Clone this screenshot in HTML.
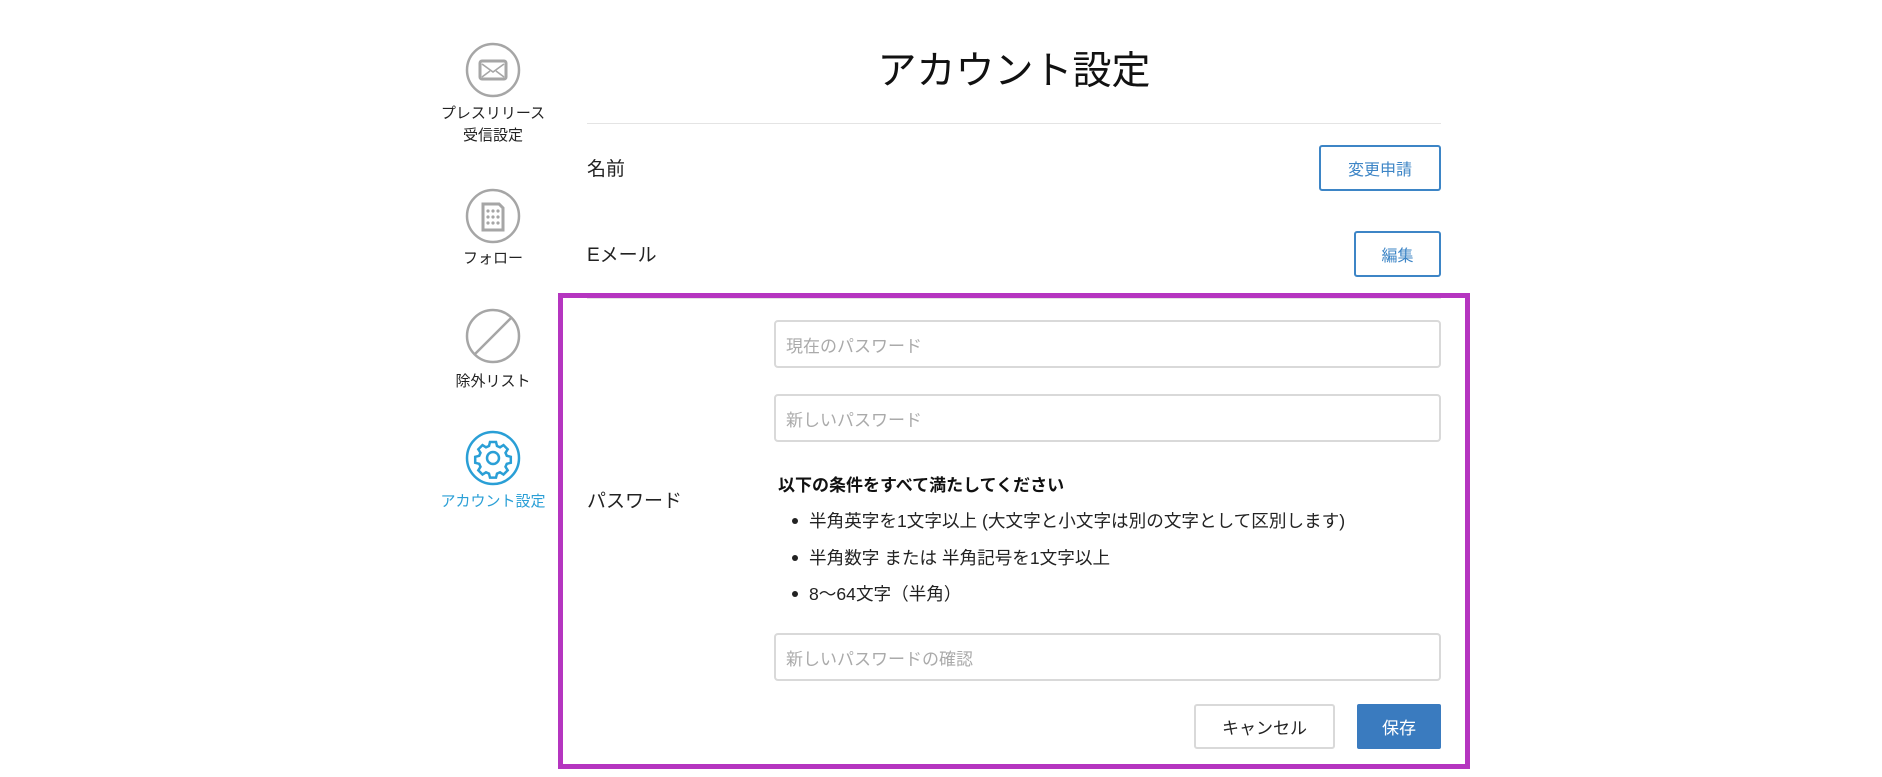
<!DOCTYPE html>
<html><head><meta charset="utf-8"><style>
*{box-sizing:border-box;margin:0;padding:0}
body{width:1882px;height:777px;background:#fff;font-family:"Liberation Sans","Noto Sans CJK JP",sans-serif;color:#222;position:relative;overflow:hidden}
.a{position:absolute}
.lbl{position:absolute;width:140px;left:423px;text-align:center;font-size:15px;line-height:22px;color:#222}
.ic{position:absolute;left:465px;width:56px;height:56px}
.btn{position:absolute;border:2px solid #3d85c6;border-radius:3px;color:#3d85c6;font-size:16px;display:flex;align-items:center;justify-content:center;background:#fff}
.inp{position:absolute;left:774px;width:667px;height:48px;border:2px solid #d9d9d9;border-radius:4px;color:#aaa;font-size:17px;padding-left:10px;display:flex;align-items:center}
.li{position:absolute;left:792px;font-size:17.6px;color:#222}
.li:before{content:"";position:absolute;left:0;top:10px;width:6px;height:6px;border-radius:50%;background:#222}
.li span{margin-left:17px}
</style></head><body>
<svg class="ic" style="top:42px" viewBox="0 0 56 56"><circle cx="28" cy="28" r="26" fill="none" stroke="#a6a6a6" stroke-width="2.5"/><rect x="15" y="19" width="26" height="18" rx="2" fill="none" stroke="#a6a6a6" stroke-width="3"/><path d="M17 22l11 8 11-8M17 35l8-6M39 35l-8-6" fill="none" stroke="#a6a6a6" stroke-width="1.6"/></svg>
<div class="lbl" style="top:103px">プレスリリース<br>受信設定</div>
<svg class="ic" style="top:188px" viewBox="0 0 56 56"><circle cx="28" cy="28" r="26" fill="none" stroke="#a6a6a6" stroke-width="2.5"/><path d="M18 16h16l4 4v22H18z" fill="none" stroke="#a6a6a6" stroke-width="3"/><g fill="#a6a6a6"><circle cx="23" cy="23" r="1.6"/><circle cx="28" cy="23" r="1.6"/><circle cx="33" cy="23" r="1.6"/><circle cx="23" cy="29" r="1.6"/><circle cx="28" cy="29" r="1.6"/><circle cx="33" cy="29" r="1.6"/><circle cx="23" cy="35" r="1.6"/><circle cx="28" cy="35" r="1.6"/><circle cx="33" cy="35" r="1.6"/></g></svg>
<div class="lbl" style="top:248px">フォロー</div>
<svg class="ic" style="top:308px" viewBox="0 0 56 56"><circle cx="28" cy="28" r="26" fill="none" stroke="#a6a6a6" stroke-width="2.5"/><path d="M46 10L10 46" stroke="#a6a6a6" stroke-width="2.5"/></svg>
<div class="lbl" style="top:371px">除外リスト</div>
<svg class="ic" style="top:430px" viewBox="0 0 56 56"><circle cx="28" cy="28" r="26" fill="none" stroke="#2a9fd6" stroke-width="2.5"/><g fill="none" stroke="#2a9fd6" stroke-width="2.5"><path d="M25 12h6l1 4 3 1.3 3.5-2.2 4.2 4.2-2.2 3.5 1.3 3 4 1v6l-4 1-1.3 3 2.2 3.5-4.2 4.2-3.5-2.2-3 1.3-1 4h-6l-1-4-3-1.3-3.5 2.2-4.2-4.2 2.2-3.5-1.3-3-4-1v-6l4-1 1.3-3-2.2-3.5 4.2-4.2 3.5 2.2 3-1.3z"/><circle cx="28" cy="28" r="6"/></g></svg>
<div class="lbl" style="top:491px;color:#2a9fd6">アカウント設定</div>
<div class="a" style="left:587px;width:854px;top:44px;text-align:center;font-size:39px;line-height:56px;color:#111">アカウント設定</div>
<div class="a" style="left:587px;width:854px;top:123px;height:1px;background:#e4e4e4"></div>
<div class="a" style="left:587px;top:154px;font-size:19px">名前</div>
<div class="btn" style="left:1319px;top:145px;width:122px;height:46px">変更申請</div>
<div class="a" style="left:587px;top:240px;font-size:19px">Eメール</div>
<div class="btn" style="left:1354px;top:231px;width:87px;height:46px">編集</div>
<div class="a" style="left:558px;top:293px;width:912px;height:476px;border:5px solid #b535c0"></div>
<div class="a" style="left:587px;width:854px;top:298px;height:1px;background:#e4e4e4"></div>
<div class="inp" style="top:320px">現在のパスワード</div>
<div class="inp" style="top:394px">新しいパスワード</div>
<div class="a" style="left:778px;top:471px;font-size:17px;font-weight:bold;color:#111">以下の条件をすべて満たしてください</div>
<div class="a" style="left:587px;top:486px;font-size:19px">パスワード</div>
<div class="li" style="top:508px"><span>半角英字を1文字以上 (大文字と小文字は別の文字として区別します)</span></div>
<div class="li" style="top:545px"><span>半角数字 または 半角記号を1文字以上</span></div>
<div class="li" style="top:581px"><span>8～64文字（半角）</span></div>
<div class="inp" style="top:633px">新しいパスワードの確認</div>
<div class="a" style="left:1194px;top:704px;width:141px;height:45px;border:2px solid #d9d9d9;border-radius:3px;display:flex;align-items:center;justify-content:center;font-size:17px;color:#222">キャンセル</div>
<div class="a" style="left:1357px;top:704px;width:84px;height:45px;background:#3a7bbf;border-radius:2px;display:flex;align-items:center;justify-content:center;font-size:17px;color:#fff">保存</div>
</body></html>
